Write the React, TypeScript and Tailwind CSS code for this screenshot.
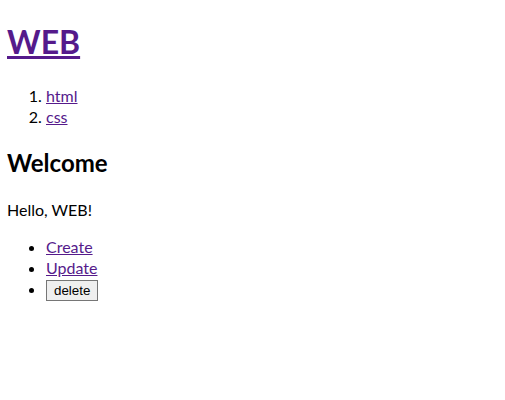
export default function App() {
  return (
    <div className="mx-[7px] my-2 font-['Lato',sans-serif] text-base leading-[21px] text-black">
      <h1 className="mb-[21.44px] mt-[20.44px] text-[32px] font-bold leading-[43px]">
        <a href="#" className="text-[#551a8b] underline">
          WEB
        </a>
      </h1>
      <ol className="my-4 list-decimal pl-[39px]">
        <li>
          <a href="#" className="text-[#551a8b] underline">
            html
          </a>
        </li>
        <li>
          <a href="#" className="text-[#551a8b] underline">
            css
          </a>
        </li>
      </ol>
      <h2 className="my-[19.92px] text-2xl font-bold leading-8">Welcome</h2>
      <p className="my-4">Hello, WEB!</p>
      <ul className="my-4 list-disc pl-[39px]">
        <li>
          <a href="#" className="text-[#551a8b] underline">
            Create
          </a>
        </li>
        <li>
          <a href="#" className="text-[#551a8b] underline">
            Update
          </a>
        </li>
        <li>
          <input
            type="button"
            value="delete"
            className="h-[21px] border border-[#767676] bg-[#efefef] px-[7px] font-['Liberation_Sans',sans-serif] text-[13.33px] leading-[16px] text-black"
          />
        </li>
      </ul>
    </div>
  );
}
